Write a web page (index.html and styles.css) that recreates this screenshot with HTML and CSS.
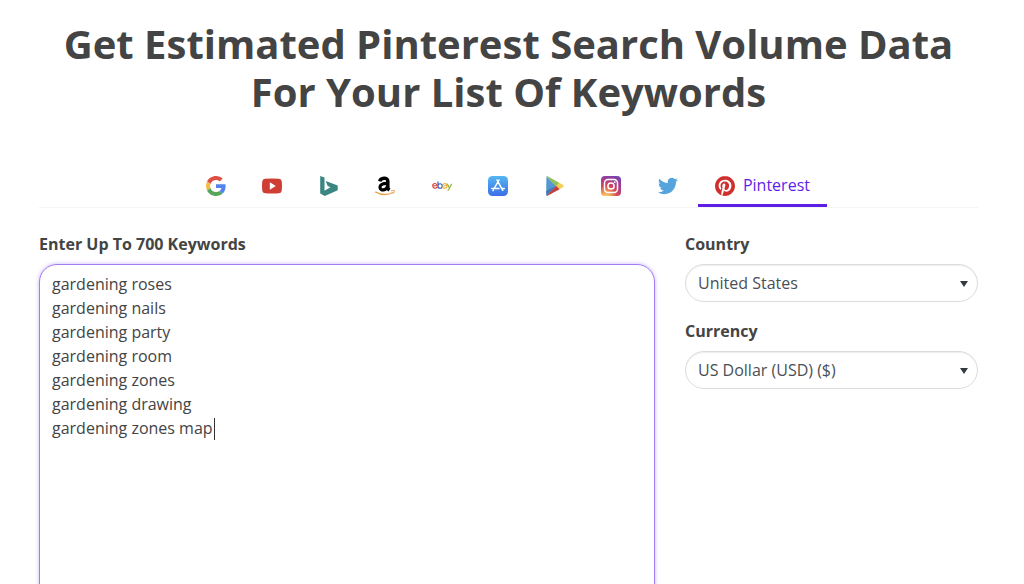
FILE: index.html
```html
<!DOCTYPE html>
<html lang="en">
<head>
<meta charset="utf-8">
<meta name="viewport" content="width=device-width, initial-scale=1">
<title>Pinterest Search Volume</title>
<link rel="stylesheet" href="styles.css">
</head>
<body>
<main class="page">
  <h1 class="title">Get Estimated Pinterest Search Volume Data<br>For Your List Of Keywords</h1>

  <nav class="tabs" aria-label="Search platforms">
    <div class="tab-list">
      <a class="tab" href="#google" aria-label="Google"><svg class="icon" viewBox="0 0 48 48"><path fill="#dd5144" d="M24 9.5c3.54 0 6.71 1.22 9.21 3.6l6.85-6.85C35.9 2.38 30.47 0 24 0 14.62 0 6.51 5.38 2.56 13.22l7.98 6.19C12.43 13.72 17.74 9.5 24 9.5z"/><path fill="#5383ec" d="M46.98 24.55c0-1.57-.15-3.09-.38-4.55H24v9.02h12.94c-.58 2.96-2.26 5.48-4.78 7.18l7.73 6c4.51-4.18 7.09-10.36 7.09-17.65z"/><path fill="#f3bd42" d="M10.53 28.59c-.48-1.45-.76-2.99-.76-4.59s.27-3.14.76-4.59l-7.98-6.19C.92 16.46 0 20.12 0 24s.92 7.54 2.56 10.78z"/><path fill="#58a55c" d="M24 48c6.48 0 11.93-2.13 15.89-5.81l-7.73-6c-2.15 1.45-4.92 2.3-8.16 2.3-6.26 0-11.57-4.22-13.47-9.91l-7.98 6.19C6.51 42.62 14.62 48 24 48z"/></svg></a>
      <a class="tab" href="#youtube" aria-label="YouTube"><svg class="icon" viewBox="0 0 20 20"><path fill="#ce3e35" d="M3 2.8Q10 2 17 2.8 19.5 3 19.7 5.3 20.3 10 19.7 14.700 19.500 17 17 17.200 10 18 3 17.200.5 17 .3 14.700-.3 10 .3 5.300.5 3 3 2.800z"/><path fill="#fff" d="M7.800 6.300v7.400l6-3.700z"/></svg></a>
      <a class="tab" href="#bing" aria-label="Bing"><svg class="icon" viewBox="0 0 20 20"><path fill="#3b8583" d="M1.200 0l4.300 1.500v13.300l6-3.500-2.800-1.400-2-4.800 12 4.500v4.600L5.800 20l-4.600-2.500z"/></svg></a>
      <a class="tab" href="#amazon" aria-label="Amazon"><svg class="icon" viewBox="0 0 20 20"><path fill="none" stroke="#000" stroke-width="3.500" d="M4.800 5.300C5.500 1.800 12.800 1 12.800 5v6.200q0 1.700 1.700 3"/><path fill="none" stroke="#000" stroke-width="3.200" d="M12.500 7.300C7.300 7.300 5 8.900 5 11.300c0 3.800 6.700 3.700 7.700-1.500"/><path fill="none" stroke="#e9a34f" stroke-width="1.300" d="M.3 15.800Q9.500 21 18.300 16.200"/><path fill="none" stroke="#e9a34f" stroke-width="1" d="M16 14.900q4.200-1 3.400.3-.1 1.200-1.200 2.600"/></svg></a>
      <a class="tab" href="#ebay" aria-label="eBay"><svg class="icon" viewBox="0 0 40 40" fill="none" stroke-width="2.400"><path stroke="#d8493e" d="M1.500 19.500h8.500c0-6-8.500-6-8.500 0 0 6 7 6 8.500 2.500"/><path stroke="#3764c4" d="M12 11v13.500M12 20c0-6 8.500-6 8.500 0s-8.500 6-8.500 0"/><path stroke="#e9b440" d="M22 17.500c1-3 7.500-3 7.500.5v6.500M29.500 19c-5 0-8 .5-8 3.300 0 3.500 8 3 8-1.500"/><path stroke="#8eb53d" d="M30.500 15.500l4.500 9M39.500 15.500L33 28h-2"/></svg></a>
      <a class="tab" href="#app-store" aria-label="App Store"><svg class="icon" viewBox="0 0 20 20"><defs><linearGradient id="app" x2="0" y2="1"><stop stop-color="#55b5f2"/><stop offset="1" stop-color="#3c6ee8"/></linearGradient></defs><rect width="20" height="20" rx="4.500" fill="url(#app)"/><path fill="none" stroke="#fff" stroke-width="1.500" stroke-linecap="round" d="M9 4l5.800 10.300M11 4L6.200 12.400M5.400 14l-.4.700M3.800 12.500h7.200M13.800 12.500h2.500"/></svg></a>
      <a class="tab" href="#google-play" aria-label="Google Play"><svg class="icon" viewBox="0 0 20 20"><path fill="#5497d1" d="M1.500.2Q.9 10 1.500 19.800L11 10z"/><path fill="#91bf5b" d="M1.500.2Q2.200-.1 3 .6L14.600 7 11 10.400z"/><path fill="#f2cf55" d="M14.200 6.700l4 2.400q1.200.9 0 1.800l-4 2.400L11 10z"/><path fill="#c83e40" d="M1.500 19.800q.7.300 1.500-.3l11.600-6.300L11 9.700z"/><path fill="#4078b0" d="M1.200 14.700L11 9.900 1.500 19.800z"/></svg></a>
      <a class="tab" href="#instagram" aria-label="Instagram"><svg class="icon" viewBox="0 0 20 20"><defs><radialGradient id="insta" cx=".25" cy="1.050" r="1.100"><stop stop-color="#f8d77a"/><stop offset=".25" stop-color="#ee9b54"/><stop offset=".52" stop-color="#d34758"/><stop offset=".8" stop-color="#a83b92"/><stop offset="1" stop-color="#7b43ad"/></radialGradient></defs><rect width="20" height="20" rx="4" fill="url(#insta)"/><g fill="none" stroke="#fff" stroke-width="1.500"><rect x="3.500" y="3.500" width="13" height="13" rx="3.500"/><circle cx="10" cy="10" r="3.100"/></g><circle cx="13.800" cy="6.200" r=".9" fill="#fff"/></svg></a>
      <a class="tab" href="#twitter" aria-label="Twitter"><svg class="icon" viewBox="0 0 24 24"><path fill="#55a4dc" d="M23.953 4.570a10 10 0 01-2.825.775 4.958 4.958 0 002.163-2.723c-.951.555-2.005.959-3.127 1.184a4.920 4.920 0 00-8.384 4.482C7.690 8.095 4.067 6.130 1.640 3.162a4.822 4.822 0 00-.666 2.475c0 1.710.87 3.213 2.188 4.096a4.904 4.904 0 01-2.228-.616v.06a4.923 4.923 0 003.946 4.827 4.996 4.996 0 01-2.212.085 4.936 4.936 0 004.604 3.417 9.867 9.867 0 01-6.102 2.105c-.39 0-.779-.023-1.170-.067a13.995 13.995 0 007.557 2.209c9.053 0 13.998-7.496 13.998-13.985 0-.21 0-.42-.015-.63A9.935 9.935 0 0024 4.590z"/></svg></a>
      <a class="tab tab-active" href="#pinterest" aria-current="page"><svg class="icon" viewBox="0 0 24 24" aria-hidden="true"><circle cx="12" cy="12" r="11.500" fill="#fff"/><path fill="#cf302d" d="M12.017 0C5.396 0 .029 5.367.029 11.987c0 5.079 3.158 9.417 7.618 11.162-.105-.949-.199-2.403.041-3.439.219-.937 1.406-5.957 1.406-5.957s-.359-.72-.359-1.781c0-1.663.967-2.911 2.168-2.911 1.024 0 1.518.769 1.518 1.688 0 1.029-.653 2.567-.992 3.992-.285 1.193.6 2.165 1.775 2.165 2.128 0 3.768-2.245 3.768-5.487 0-2.861-2.063-4.869-5.008-4.869-3.410 0-5.409 2.562-5.409 5.199 0 1.033.394 2.143.889 2.741.099.12.112.225.085.345-.09.375-.293 1.199-.334 1.363-.053.225-.172.271-.401.165-1.495-.69-2.433-2.878-2.433-4.646 0-3.776 2.748-7.252 7.920-7.252 4.158 0 7.392 2.967 7.392 6.923 0 4.135-2.607 7.462-6.233 7.462-1.214 0-2.354-.629-2.758-1.379l-.749 2.848c-.269 1.045-1.004 2.352-1.498 3.146 1.123.345 2.306.535 3.550.535 6.607 0 11.985-5.365 11.985-11.987C23.970 5.390 18.592.026 11.985.026z"/></svg><span>Pinterest</span></a>
    </div>
  </nav>

  <form class="form">
    <div class="field keywords">
      <label for="keywords">Enter Up To 700 Keywords</label>
      <div class="editor">
        <textarea id="keywords" class="control textarea" spellcheck="false">gardening roses
gardening nails
gardening party
gardening room
gardening zones
gardening drawing
gardening zones map</textarea>
        <span class="caret" aria-hidden="true"></span>
      </div>
    </div>
    <div class="options">
      <div class="field">
        <label for="country">Country</label>
        <div class="select-wrap">
          <select id="country" class="control select"><option>United States</option></select>
          <svg class="arrow" viewBox="0 0 8 6" aria-hidden="true"><path d="M0 0h8L4 6z"/></svg>
        </div>
      </div>
      <div class="field">
        <label for="currency">Currency</label>
        <div class="select-wrap">
          <select id="currency" class="control select"><option>US Dollar (USD) ($)</option></select>
          <svg class="arrow" viewBox="0 0 8 6" aria-hidden="true"><path d="M0 0h8L4 6z"/></svg>
        </div>
      </div>
    </div>
  </form>
</main>
</body>
</html>
```
FILE: styles.css
```css
* { box-sizing: border-box; }

body {
  margin: 0;
  height: 100vh;
  overflow: hidden;
  background: #fff;
  color: #444;
  font: 16px/24px "Open Sans", sans-serif;
}

.page { padding: 20px 46px 0 39px; }

.title {
  margin: 0;
  text-align: center;
  font-size: 40px;
  line-height: 48px;
  font-weight: 700;
}

.tabs {
  display: flex;
  justify-content: center;
  margin-top: 50px;
  border-bottom: 1px solid #f4f4f4;
}

.tab-list {
  display: flex;
  justify-content: space-between;
  width: 637px;
}

.tab {
  display: flex;
  align-items: center;
  gap: 8px;
  height: 41px;
  padding: 0 16px;
  border-bottom: 3px solid transparent;
  color: #5f1ee6;
  text-decoration: none;
}

.tab-active {
  padding: 0 17px;
  border-color: #5f1ee6;
}

.icon {
  display: block;
  width: 20px;
  height: 20px;
  margin-top: 2px;
}

.form {
  display: grid;
  grid-template-columns: 616fr 293fr;
  gap: 30px;
  margin-top: 24px;
}

.field { display: flex; flex-direction: column; gap: 8px; }

.field label { font-weight: 700; }

.options { display: flex; flex-direction: column; gap: 17px; }

.editor, .select-wrap { position: relative; }

.control {
  display: block;
  width: 100%;
  border: 1px solid #dcdcdc;
  background: #fff;
  font: inherit;
  outline: none;
}

.textarea {
  height: 400px;
  padding: 7px 12px;
  border-color: #a37cf5;
  border-radius: 18px;
  box-shadow: 0 0 4px #c9b5f7;
  color: #444;
  resize: none;
}

.caret {
  position: absolute;
  left: 175px;
  top: 154px;
  width: 1px;
  height: 22px;
  background: #333;
}

.select {
  height: 38px;
  padding: 0 32px 0 12px;
  border-radius: 19px;
  box-shadow: inset 0 1px 1px #eee;
  color: #495057;
  appearance: none;
}

.arrow {
  position: absolute;
  top: 17px;
  right: 10px;
  width: 8px;
  height: 6px;
  fill: #343a40;
  pointer-events: none;
}
```
